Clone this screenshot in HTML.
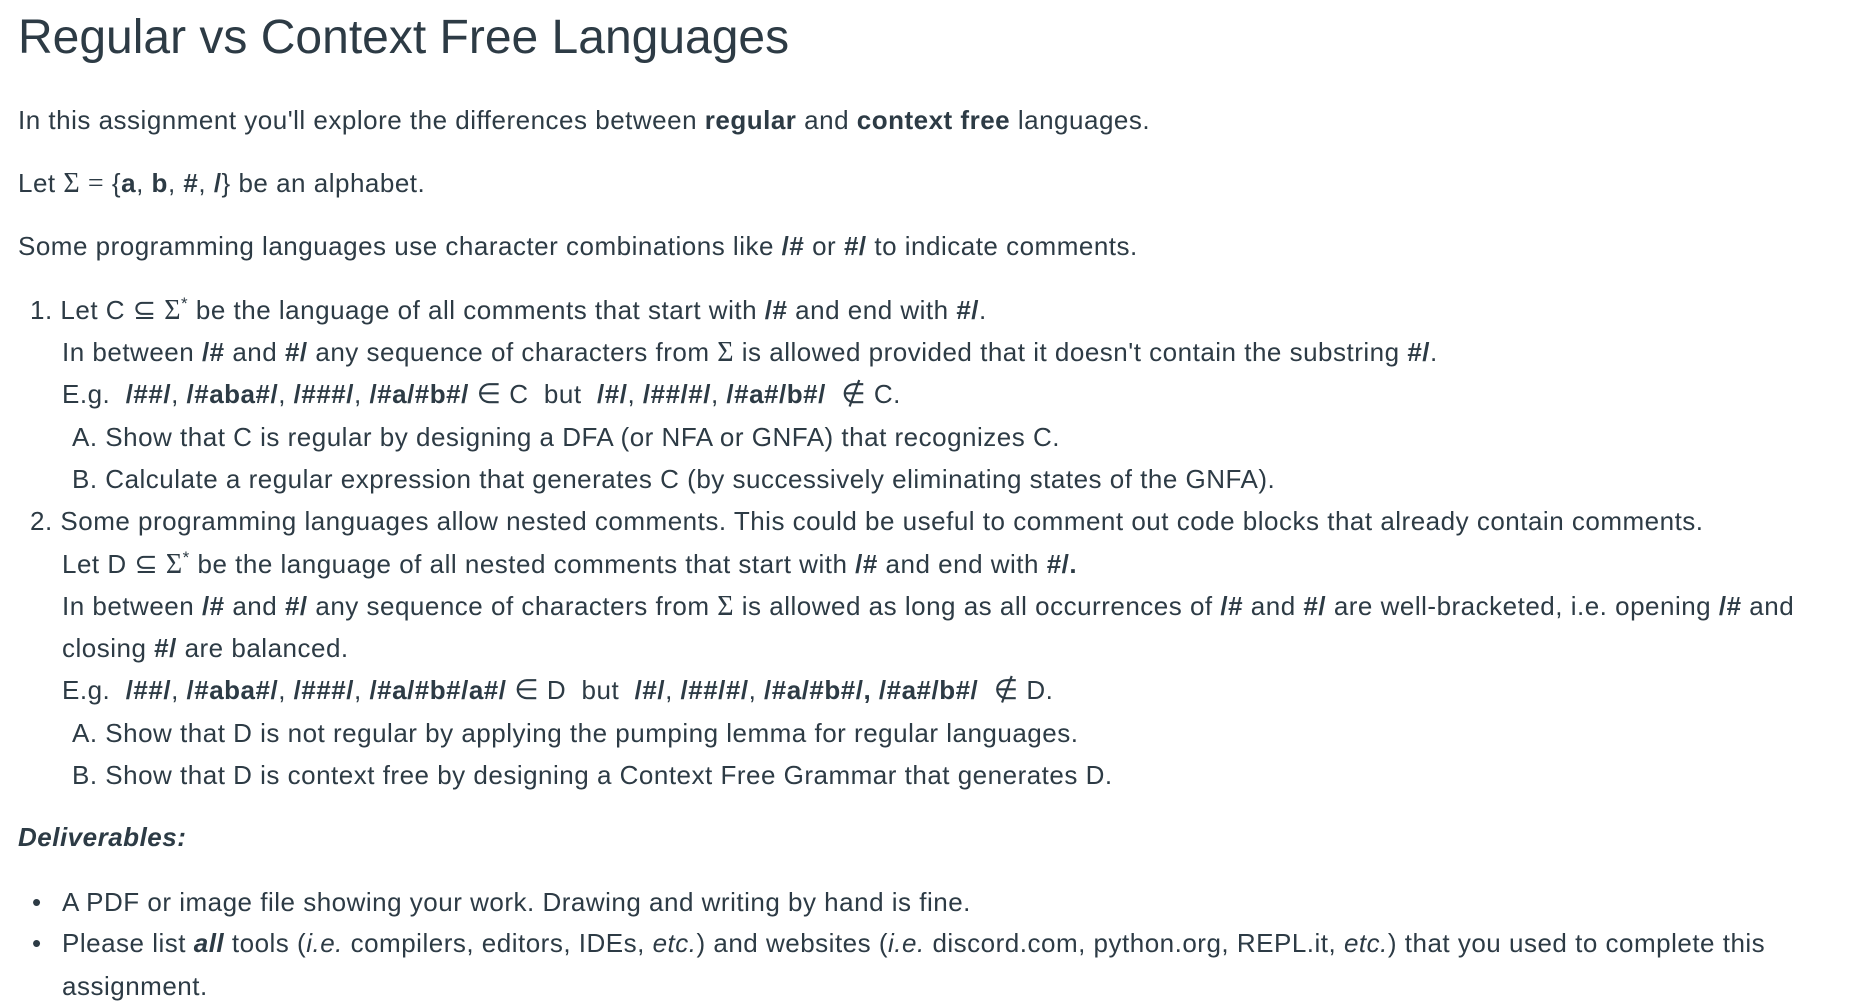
<!DOCTYPE html>
<html><head><meta charset="utf-8"><style>
body{margin:0;width:1853px;height:1002px;background:#fff;overflow:hidden;font-family:"Liberation Sans",sans-serif;color:#2d3b45}
.l{position:absolute;white-space:nowrap;font-size:26px;height:42px;line-height:42px;letter-spacing:0.5px}
.m{font-family:"Liberation Serif",serif;font-size:28px}
sup{font-size:17px;line-height:0;vertical-align:10px}
h1{position:absolute;left:18px;top:9px;margin:0;font-weight:normal;font-size:48px;line-height:58px;white-space:nowrap;letter-spacing:0px}
b{font-weight:bold}
</style></head><body>
<h1>Regular vs Context Free Languages</h1>
<div class="l" style="left:18px;top:99px">In this assignment you'll explore the differences between <b>regular</b> and <b>context free</b> languages.</div>
<div class="l" style="left:18px;top:162px">Let <span class="m">Σ</span> <span class="m">=</span> {<b>a</b>, <b>b</b>, <b>#</b>, <b>/</b>} be an alphabet.</div>
<div class="l" style="left:18px;top:225px">Some programming languages use character combinations like <b>/#</b> or <b>#/</b> to indicate comments.</div>
<div class="l" style="left:30px;top:289px">1. Let C <span class="m">⊆ Σ</span><sup>*</sup> be the language of all comments that start with <b>/#</b> and end with <b>#/</b>.</div>
<div class="l" style="left:62px;top:331px">In between <b>/#</b> and <b>#/</b> any sequence of characters from <span class="m">Σ</span> is allowed provided that it doesn't contain the substring <b>#/</b>.</div>
<div class="l" style="left:62px;top:373px">E.g.&nbsp; <b>/##/</b>, <b>/#aba#/</b>, <b>/###/</b>, <b>/#a/#b#/</b> <span class="m">∈</span> C&nbsp; but&nbsp; <b>/#/</b>, <b>/##/#/</b>, <b>/#a#/b#/</b>&nbsp; <span class="m">∉</span> C.</div>
<div class="l" style="left:72px;top:416px">A. Show that C is regular by designing a DFA (or NFA or GNFA) that recognizes C.</div>
<div class="l" style="left:72px;top:458px">B. Calculate a regular expression that generates C (by successively eliminating states of the GNFA).</div>
<div class="l" style="left:30px;top:500px">2. Some programming languages allow nested comments. This could be useful to comment out code blocks that already contain comments.</div>
<div class="l" style="left:62px;top:543px">Let D <span class="m">⊆ Σ</span><sup>*</sup> be the language of all nested comments that start with <b>/#</b> and end with <b>#/.</b></div>
<div class="l" style="left:62px;top:585px">In between <b>/#</b> and <b>#/</b> any sequence of characters from <span class="m">Σ</span> is allowed as long as all occurrences of <b>/#</b> and <b>#/</b> are well-bracketed, i.e. opening <b>/#</b> and</div>
<div class="l" style="left:62px;top:627px">closing <b>#/</b> are balanced.</div>
<div class="l" style="left:62px;top:669px">E.g.&nbsp; <b>/##/</b>, <b>/#aba#/</b>, <b>/###/</b>, <b>/#a/#b#/a#/</b> <span class="m">∈</span> D&nbsp; but&nbsp; <b>/#/</b>, <b>/##/#/</b>, <b>/#a/#b#/, /#a#/b#/</b>&nbsp; <span class="m">∉</span> D.</div>
<div class="l" style="left:72px;top:712px">A. Show that D is not regular by applying the pumping lemma for regular languages.</div>
<div class="l" style="left:72px;top:754px">B. Show that D is context free by designing a Context Free Grammar that generates D.</div>
<div class="l" style="left:18px;top:816px"><b><i>Deliverables:</i></b></div>
<div class="l" style="left:32px;top:881px">•</div>
<div class="l" style="left:62px;top:881px">A PDF or image file showing your work. Drawing and writing by hand is fine.</div>
<div class="l" style="left:32px;top:922px">•</div>
<div class="l" style="left:62px;top:922px">Please list <b><i>all</i></b> tools (<i>i.e.</i> compilers, editors, IDEs, <i>etc.</i>) and websites (<i>i.e.</i> discord.com, python.org, REPL.it, <i>etc.</i>) that you used to complete this</div>
<div class="l" style="left:62px;top:965px">assignment.</div>
</body></html>
